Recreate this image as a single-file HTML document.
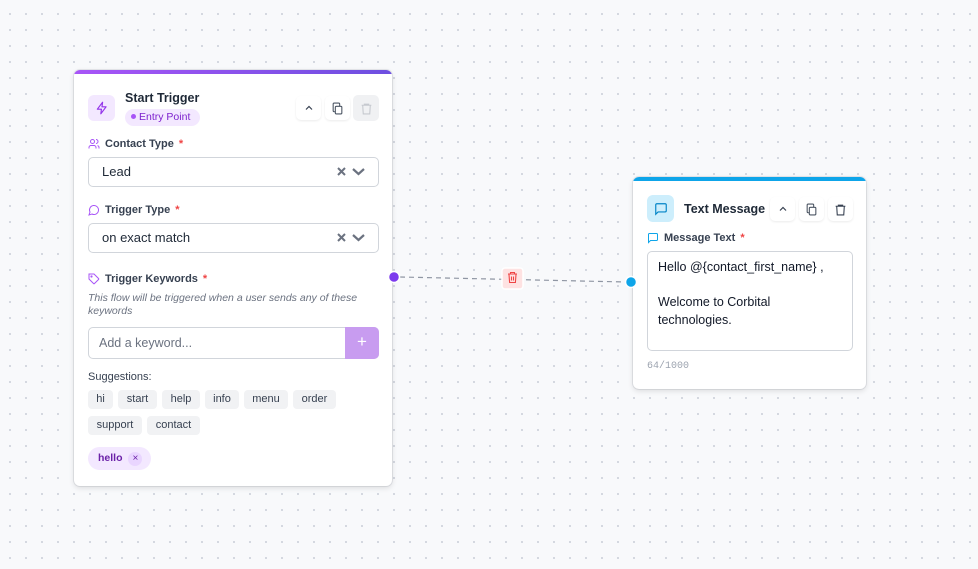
<!DOCTYPE html>
<html><head><style>
*{box-sizing:border-box;margin:0;padding:0}
body{width:978px;height:569px;overflow:hidden;position:relative;font-family:"Liberation Sans",sans-serif;background-color:#f8f9fb;background-image:radial-gradient(circle,#cfd3dc 0.9px,transparent 1.2px);background-size:16px 16px;background-position:2px 6px;color:#1f2937}
.card{position:absolute;background:#fff;border-radius:6px;box-shadow:0 2px 6px rgba(0,0,0,.12),0 0 0 1px #e5e7eb;overflow:hidden}
.bar{position:absolute;left:0;right:0;top:0;height:4px}
.abs{position:absolute}
.ib{position:absolute;border-radius:6px;display:flex;align-items:center;justify-content:center}
.btn{position:absolute;width:25px;height:24px;border-radius:5px;background:#fff;box-shadow:0 1px 2px rgba(0,0,0,.08);display:flex;align-items:center;justify-content:center}
.lbl{position:absolute;font-size:11px;font-weight:bold;color:#374151;display:flex;align-items:center;gap:5px}
.req{color:#ef4444}
.sel{position:absolute;left:14px;width:291px;height:30px;border:1px solid #d1d5db;border-radius:5px;font-size:13px;padding:6px 13px;color:#1f2937}
.sel .ic{position:absolute;right:10px;top:8px}
.chip{position:absolute;height:19px;background:#f1f2f4;border-radius:4px;font-size:11px;color:#374151;text-align:center;line-height:19px}
</style></head><body>

<div class="card" style="left:74px;top:70px;width:318px;height:416px">
<div class="bar" style="background:linear-gradient(90deg,#a855f7,#6d4fe0)"></div>
<div class="ib" style="left:14px;top:25px;width:27px;height:26px;background:#f3e8ff"><svg width="14" height="14" viewBox="0 0 24 24" fill="none" stroke="#9333ea" stroke-width="2" stroke-linejoin="round"><path d="M13 2L4 14h7l-1 8 9-12h-7z"/></svg></div>
<div class="abs" style="left:51px;top:21px;font-size:12.5px;font-weight:bold;color:#1f2937">Start Trigger</div>
<div class="abs" style="left:51px;top:39px;height:17px;width:75px;border-radius:9px;background:#f3e8ff;color:#7e22ce;font-size:10.5px;line-height:17px;padding-left:6px"><span style="display:inline-block;width:5px;height:5px;border-radius:50%;background:#a855f7;vertical-align:middle;margin-right:3px;position:relative;top:-1px"></span>Entry Point</div>
<div class="btn" style="left:222px;top:26px"><svg width="10" height="10" viewBox="0 0 10 10"><path d="M2 6.5L5 3.5 8 6.5" fill="none" stroke="#374151" stroke-width="1.2"/></svg></div>
<div class="btn" style="left:251px;top:26px"><svg width="13" height="13" viewBox="0 0 24 24" fill="none" stroke="#4b5563" stroke-width="2"><rect x="8" y="8" width="12" height="14" rx="2"/><path d="M16 8V4a2 2 0 0 0-2-2H6a2 2 0 0 0-2 2v12a2 2 0 0 0 2 2h2"/></svg></div>
<div class="btn" style="left:279px;top:25px;width:26px;height:26px;background:#f0f1f3;box-shadow:none"><svg width="13" height="13" viewBox="0 0 24 24" fill="none" stroke="#c6c9cf" stroke-width="2"><path d="M3 6h18M8 6V4h8v2M5 6l1 16h12l1-16"/></svg></div>
<div class="lbl" style="left:14px;top:68px"><svg width="12" height="12" viewBox="0 0 24 24" fill="none" stroke="#a855f7" stroke-width="2"><circle cx="9" cy="7" r="4"/><path d="M2 21v-2a4 4 0 0 1 4-4h6a4 4 0 0 1 4 4v2M16 3a4 4 0 0 1 0 8M22 21v-2a4 4 0 0 0-3-3.9"/></svg>Contact Type <span class="req">*</span></div>
<div class="sel" style="top:87px">Lead<svg class="ic" width="32" height="12" viewBox="0 0 32 12"><path d="M2 2l7 7M9 2L2 9" stroke="#6b7280" stroke-width="2"/><path d="M17 3l5.5 5L28 3" fill="none" stroke="#6b7280" stroke-width="2.2"/></svg></div>
<div class="lbl" style="left:14px;top:134px"><svg width="12" height="12" viewBox="0 0 24 24" fill="none" stroke="#a855f7" stroke-width="2"><path d="M7.9 20A9 9 0 1 0 4 16.1L2 22z"/></svg>Trigger Type <span class="req">*</span></div>
<div class="sel" style="top:153px">on exact match<svg class="ic" width="32" height="12" viewBox="0 0 32 12"><path d="M2 2l7 7M9 2L2 9" stroke="#6b7280" stroke-width="2"/><path d="M17 3l5.5 5L28 3" fill="none" stroke="#6b7280" stroke-width="2.2"/></svg></div>
<div class="lbl" style="left:14px;top:203px"><svg width="12" height="12" viewBox="0 0 24 24" fill="none" stroke="#a855f7" stroke-width="2"><path d="M12 2H2v10l9.3 9.3a1 1 0 0 0 1.4 0l8.6-8.6a1 1 0 0 0 0-1.4z"/><circle cx="7" cy="7" r="1.2"/></svg>Trigger Keywords <span class="req">*</span></div>
<div class="abs" style="left:14px;top:222px;width:290px;font-size:10.5px;line-height:13px;font-style:italic;color:#6b7280">This flow will be triggered when a user sends any of these keywords</div>
<div class="abs" style="left:14px;top:257px;width:291px;height:32px;border:1px solid #d1d5db;border-radius:5px;font-size:12.5px;color:#6b7280;padding:8px 10px">Add a keyword...</div>
<div class="abs" style="left:271px;top:257px;width:34px;height:32px;background:#c89cf0;border-radius:0 5px 5px 0;color:#fff;text-align:center;font-size:17px;line-height:30px">+</div>
<div class="abs" style="left:14px;top:301px;font-size:11px;color:#374151">Suggestions:</div>
<div class="chip" style="left:14px;top:320px;width:25px">hi</div>
<div class="chip" style="left:44px;top:320px;width:39px">start</div>
<div class="chip" style="left:88px;top:320px;width:38px">help</div>
<div class="chip" style="left:131px;top:320px;width:34px">info</div>
<div class="chip" style="left:170px;top:320px;width:44px">menu</div>
<div class="chip" style="left:219px;top:320px;width:43px">order</div>
<div class="chip" style="left:14px;top:346px;width:54px">support</div>
<div class="chip" style="left:73px;top:346px;width:53px">contact</div>
<div class="abs" style="left:14px;top:377px;width:63px;height:23px;border-radius:12px;background:#f3e8ff;color:#6b21a8;font-size:10.5px;font-weight:bold;line-height:23px;padding-left:10px">hello <span style="display:inline-block;width:14px;height:14px;border-radius:50%;background:#e9d5ff;text-align:center;line-height:14px;font-weight:normal;font-size:10px;margin-left:3px">×</span></div>
</div>

<div class="card" style="left:633px;top:177px;width:233px;height:212px">
<div class="bar" style="background:#0ea5e9"></div>
<div class="ib" style="left:14px;top:18px;width:27px;height:27px;background:#cdeefc"><svg width="14" height="14" viewBox="0 0 24 24" fill="none" stroke="#0284c7" stroke-width="2"><path d="M21 15a2 2 0 0 1-2 2H7l-4 4V5a2 2 0 0 1 2-2h14a2 2 0 0 1 2 2z"/></svg></div>
<div class="abs" style="left:51px;top:25px;font-size:12.5px;font-weight:bold;color:#1f2937">Text Message</div>
<div class="btn" style="left:137px;top:20px"><svg width="10" height="10" viewBox="0 0 10 10"><path d="M2 6.5L5 3.5 8 6.5" fill="none" stroke="#374151" stroke-width="1.2"/></svg></div>
<div class="btn" style="left:166px;top:20px"><svg width="13" height="13" viewBox="0 0 24 24" fill="none" stroke="#4b5563" stroke-width="2"><rect x="8" y="8" width="12" height="14" rx="2"/><path d="M16 8V4a2 2 0 0 0-2-2H6a2 2 0 0 0-2 2v12a2 2 0 0 0 2 2h2"/></svg></div>
<div class="btn" style="left:195px;top:20px"><svg width="13" height="13" viewBox="0 0 24 24" fill="none" stroke="#374151" stroke-width="2"><path d="M3 6h18M8 6V4h8v2M5 6l1 16h12l1-16"/></svg></div>
<div class="lbl" style="left:14px;top:55px"><svg width="12" height="12" viewBox="0 0 24 24" fill="none" stroke="#0ea5e9" stroke-width="2"><path d="M21 15a2 2 0 0 1-2 2H7l-4 4V5a2 2 0 0 1 2-2h14a2 2 0 0 1 2 2z"/></svg>Message Text <span class="req">*</span></div>
<div class="abs" style="left:14px;top:74px;width:206px;height:100px;border:1px solid #d1d5db;border-radius:5px;font-size:12.5px;line-height:17.5px;padding:7px 10px;color:#111827">Hello @{contact_first_name} ,<br><br>Welcome to Corbital technologies.</div>
<div class="abs" style="left:14px;top:184px;font-family:'Liberation Mono',monospace;font-size:10px;color:#9ca3af">64/1000</div>
</div>

<svg class="abs" style="left:0;top:0" width="978" height="569">
<line x1="400" y1="277" x2="626" y2="282" stroke="#8f96a3" stroke-width="1.2" stroke-dasharray="5 4"/>
<circle cx="394" cy="277" r="5.5" fill="#7c3aed" stroke="#fff" stroke-width="1.5"/>
<circle cx="631" cy="282" r="5.5" fill="#0ea5e9" stroke="#fff" stroke-width="1.5"/>
<rect x="502" y="268" width="21" height="21" rx="3" fill="#fee2e2" stroke="#fff" stroke-width="1.5"/>
<g stroke="#ef4444" fill="none" stroke-width="1.1"><path d="M508 274h9M510.5 274v-1.5h4v1.5M509 274.5l.6 8h5.8l.6-8M511.5 276.5v4M513.5 276.5v4"/></g>
</svg>
</body></html>
